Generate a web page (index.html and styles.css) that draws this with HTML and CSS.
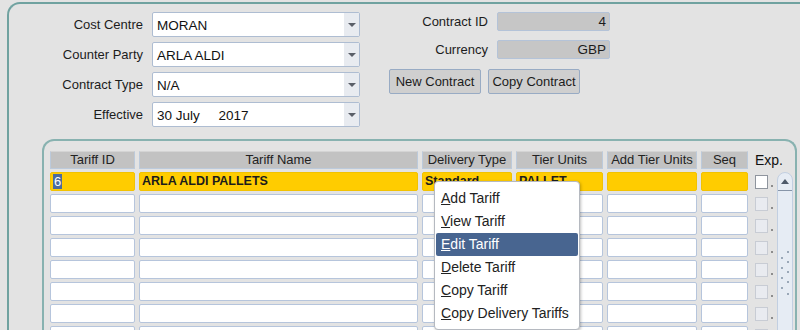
FILE: index.html
```html
<!DOCTYPE html>
<html>
<head>
	<title>Contract Tariffs</title>
	<meta charset="utf-8">
	<link rel="stylesheet" href="styles.css">
</head>
<body>
	<div class="frame">
		<div class="top">
			<div class="fields">
				<label>Cost Centre</label>
				<div class="combo"><span>MORAN</span><i class="drop"></i></div>
				<label>Counter Party</label>
				<div class="combo"><span>ARLA ALDI</span><i class="drop"></i></div>
				<label>Contract Type</label>
				<div class="combo"><span>N/A</span><i class="drop"></i></div>
				<label>Effective</label>
				<div class="combo"><span>30 July &nbsp;&nbsp;&nbsp;&nbsp;2017</span><i class="drop"></i></div>
			</div>
			<div class="side">
				<div class="info">
					<label>Contract ID</label>
					<div class="ro">4</div>
					<label>Currency</label>
					<div class="ro">GBP</div>
				</div>
				<div class="buttons">
					<button type="button">New Contract</button>
					<button type="button">Copy Contract</button>
				</div>
			</div>
		</div>

		<div class="block">
			<div class="grid" id="grid">
				<div class="hd">Tariff ID</div>
				<div class="hd">Tariff Name</div>
				<div class="hd">Delivery Type</div>
				<div class="hd">Tier Units</div>
				<div class="hd">Add Tier Units</div>
				<div class="hd">Seq</div>
				<div class="exp">Exp.</div>
				<div></div>
				<div class="scroll">
					<div class="up"></div>
					<svg class="grip" width="14" height="56" viewBox="0 0 14 56">
						<g fill="#9aa8b8">
							<rect x="9" y="2" width="2" height="2"/><rect x="3" y="8" width="2" height="2"/>
							<rect x="9" y="12" width="2" height="2"/><rect x="3" y="18" width="2" height="2"/>
							<rect x="9" y="22" width="2" height="2"/><rect x="3" y="28" width="2" height="2"/>
							<rect x="9" y="32" width="2" height="2"/><rect x="3" y="38" width="2" height="2"/>
							<rect x="9" y="44" width="2" height="2"/>
						</g>
					</svg>
				</div>

				<div class="cell sel"><span class="mark">6</span></div>
				<div class="cell sel">ARLA ALDI PALLETS</div>
				<div class="cell sel">Standard</div>
				<div class="cell sel">PALLET</div>
				<div class="cell sel"></div>
				<div class="cell sel"></div>
				<div class="chk"><span class="box on"></span><span class="dot"></span></div>
			</div>
		</div>
	</div>

	<div class="menu">
		<div class="item"><u>A</u>dd Tariff</div>
		<div class="item"><u>V</u>iew Tariff</div>
		<div class="item active"><u>E</u>dit Tariff</div>
		<div class="item"><u>D</u>elete Tariff</div>
		<div class="item"><u>C</u>opy Tariff</div>
		<div class="item"><u>C</u>opy Delivery Tariffs</div>
	</div>

	<script type="text/javascript">
		var grid = document.getElementById('grid')
		for (var r = 0; r < 7; r++) {
			var row = ''
			for (var c = 0; c < 6; c++) {
				row += '<div class="cell"></div>'
			}
			row += '<div class="chk"><span class="box"></span><span class="dot"></span></div>'
			grid.innerHTML += row
		}
	</script>
</body>
</html>
```

FILE: styles.css
```css
html, body {
	height: 330px;
	overflow: hidden;
}
body {
	margin: 0;
	background-color: #e3e3e3;
	font-family: "Liberation Sans", Arial, sans-serif;
	font-size: 13px;
	color: #1c1c1c;
}
.frame {
	margin: 2px 0 0 7px;
	height: 400px;
	border-top: solid 2px #70a2a0;
	border-left: solid 2px #70a2a0;
	border-top-left-radius: 13px;
}
.top {
	display: flex;
	padding-top: 8px;
}
.fields {
	display: grid;
	grid-template-columns: 134px 208px;
	grid-auto-rows: 25px;
	column-gap: 9px;
	row-gap: 5px;
}
.fields label, .info label {
	text-align: right;
	align-self: center;
}
.combo {
	display: flex;
	align-items: center;
	background-color: white;
	border: solid 1px #aebdd2;
	border-radius: 2px;
	font-size: 13.5px;
	color: #111;
}
.combo span {
	flex: 1;
	padding-left: 4px;
	padding-top: 1px;
}
.drop {
	width: 15px;
	align-self: stretch;
	background-color: #e8ebf0;
	position: relative;
}
.drop::after {
	content: "";
	position: absolute;
	left: 4px;
	top: 10px;
	border-left: 4px solid transparent;
	border-right: 4px solid transparent;
	border-top: 4px solid #5a5f68;
}
.side {
	margin-left: 29px;
}
.info {
	display: grid;
	grid-template-columns: 99px 113px;
	grid-auto-rows: 19px;
	column-gap: 9px;
	row-gap: 9px;
}
.ro {
	background-color: #c6c6c6;
	border: solid 1px #b4c3d8;
	border-radius: 2px;
	text-align: right;
	padding-right: 3px;
	line-height: 18px;
	font-size: 13.5px;
}
.buttons {
	display: flex;
	gap: 7px;
	margin-top: 10px;
}
.buttons button {
	width: 92px;
	height: 25px;
	padding: 0;
	background-color: #cfcfcf;
	border: solid 1px #98abc4;
	border-radius: 2px;
	font-family: "Liberation Sans", Arial, sans-serif;
	font-size: 13px;
	color: #1c1c1c;
}
.block {
	margin: 12px 3px 0 33px;
	height: 300px;
	padding: 10px 0 0 6px;
	border-top: solid 2px #88b2b0;
	border-left: solid 2px #88b2b0;
	border-right: solid 2px #88b2b0;
	border-radius: 12px 12px 0 0;
}
.grid {
	display: grid;
	grid-template-columns: 85px 279px 90px 87px 90px 47px 21px 16px;
	grid-template-rows: 18px;
	grid-auto-rows: 19px;
	column-gap: 4px;
	row-gap: 3px;
}
.hd {
	background-color: #c2c2c2;
	border: solid 1px #bccadb;
	border-top-color: #d4d4d4;
	text-align: center;
	line-height: 16px;
	color: #222;
}
.exp {
	font-size: 14px;
	line-height: 18px;
	padding-left: 3px;
	color: #111;
}
.cell {
	background-color: white;
	border: solid 1px #b6c5dc;
	border-radius: 2px;
	font-weight: bold;
	font-size: 12.5px;
	line-height: 17px;
	padding-left: 2px;
	overflow: hidden;
	white-space: nowrap;
}
.cell.sel {
	background-color: #ffcc00;
	border-color: #f2c200;
}
.mark {
	background-color: #4b6b9c;
	color: white;
	font-weight: normal;
	font-size: 13px;
	padding: 0 1px;
}
.chk {
	display: flex;
	align-items: center;
	padding-left: 3px;
}
.box {
	width: 12px;
	height: 12px;
	background-color: #e9ebf0;
	border: solid 1px #c8ccd4;
}
.box.on {
	background-color: white;
	border-color: #8f959e;
}
.dot {
	width: 2px;
	height: 2px;
	background-color: #8d8d8d;
	margin: 9px 0 0 3px;
}
.scroll {
	grid-column: 8;
	grid-row: 2 / span 8;
	background-color: #e6ecf4;
	border: solid 1px #c2cfe1;
	border-radius: 8px 8px 0 0;
	display: flex;
	flex-direction: column;
	align-items: center;
}
.up {
	width: 100%;
	height: 17px;
	border-bottom: solid 1px #8795a8;
	position: relative;
}
.up::after {
	content: "";
	position: absolute;
	left: 3px;
	top: 6px;
	border-left: 4px solid transparent;
	border-right: 4px solid transparent;
	border-bottom: 5px solid #4e5a6a;
}
.grip {
	margin-top: 58px;
}
.menu {
	position: absolute;
	left: 434px;
	top: 181px;
	width: 142px;
	padding: 5px 1px 4px 1px;
	background-color: white;
	border: solid 1px #b5b9c0;
	border-radius: 4px;
	box-shadow: 1px 1px 3px rgba(0, 0, 0, 0.25);
	font-size: 14px;
	color: #222;
}
.item {
	height: 23px;
	line-height: 23px;
	padding-left: 5px;
	white-space: nowrap;
}
.item.active {
	background-color: #486590;
	color: white;
	border-radius: 2px;
}
```
